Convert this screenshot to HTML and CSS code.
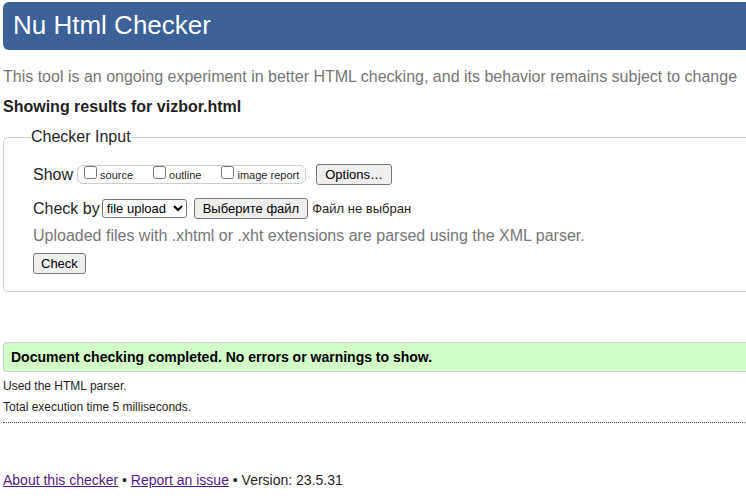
FILE: index.html
```html
<!DOCTYPE html>
<html lang="en">
<head>
<meta charset="utf-8">
<meta name="viewport" content="width=device-width, initial-scale=1">
<title>Nu Html Checker</title>
<link rel="stylesheet" href="styles.css">
</head>
<body>
<header class="banner"><h1>Nu Html Checker</h1></header>
<main>
<p class="intro">This tool is an ongoing experiment in better HTML checking, and its behavior remains subject to change</p>
<h2 class="subject">Showing results for vizbor.html</h2>
<form>
<fieldset class="panel">
<legend>Checker Input</legend>
<div class="row show-row">
<span>Show</span>
<div class="checks">
<label><input type="checkbox" name="source"><span>source</span></label>
<label><input type="checkbox" name="outline"><span>outline</span></label>
<label><input type="checkbox" name="images"><span>image report</span></label>
</div>
<button type="button" class="btn">Options…</button>
</div>
<div class="row input-row">
<label for="method">Check by</label>
<select id="method" class="method"><option>file upload</option></select>
<label class="file"><span class="btn">Выберите файл</span><span>Файл не выбран</span><input type="file" name="file"></label>
</div>
<p class="hint">Uploaded files with .xhtml or .xht extensions are parsed using the XML parser.</p>
<button type="button" class="btn">Check</button>
</fieldset>
</form>
<p class="success">Document checking completed. No errors or warnings to show.</p>
<div class="details">
<p>Used the HTML parser.</p>
<p>Total execution time 5 milliseconds.</p>
</div>
</main>
<footer><a href="#about">About this checker</a> • <a href="#issue">Report an issue</a> • Version: 23.5.31</footer>
</body>
</html>
```

FILE: styles.css
```css
* {
  box-sizing: border-box;
}

body {
  margin: 0;
  padding: 2px 0 0 3px;
  background: #fff;
  color: #1f1f1f;
  font: 16px/20px "Liberation Sans", Arial, sans-serif;
}

h1,
h2,
p {
  margin: 0;
}

.banner {
  padding: 7px 10px 9px;
  border-radius: 6px 0 0 6px;
  background: #3c6098;
  color: #fff;
}

h1 {
  font-size: 26px;
  font-weight: 400;
  line-height: 32px;
}

.intro {
  margin-top: 17px;
  color: #767676;
  white-space: nowrap;
}

.subject {
  margin-top: 10px;
  font-size: 16px;
  line-height: 20px;
}

.panel {
  min-width: 0;
  margin: 10px 0 0;
  padding: 17px 0 17px 29px;
  border: 1px solid #ccc;
  border-right: 0;
  border-radius: 5px 0 0 5px;
}

legend {
  margin-left: -2px;
  padding: 0;
}

.row {
  display: flex;
  align-items: center;
}

.checks {
  display: flex;
  gap: 20px;
  height: 19px;
  margin: 0 10px 0 4px;
  padding: 0 6px;
  border: 1px solid #ccc;
  border-radius: 6px;
  font-size: 11px;
  line-height: 19px;
}

.checks label {
  display: flex;
  gap: 3px;
}

.checks input {
  width: 13px;
  height: 13px;
  margin: 0;
}

.btn {
  display: inline-block;
  height: 21px;
  padding: 0 7px;
  border: 1px solid #767676;
  border-radius: 3px;
  background: #efefef;
  color: #000;
  font: 13px/19px "Liberation Sans", Arial, sans-serif;
}

.show-row .btn,
.file .btn {
  padding: 0 8px;
}

.input-row {
  margin-top: 13px;
}

.method {
  width: 85px;
  height: 19px;
  margin: 0 7px 0 2px;
  padding: 0;
  border: 1px solid #767676;
  border-radius: 3px;
  background: #fff;
  color: #000;
  font: 13px "Liberation Sans", Arial, sans-serif;
}

.file {
  position: relative;
  display: flex;
  align-items: center;
  gap: 4px;
  font-size: 13px;
}

.file input {
  position: absolute;
  inset: 0;
  width: 100%;
  opacity: 0;
}

.hint {
  margin: 7px 0;
  color: #767676;
}

.success {
  margin-top: 50px;
  padding: 4px 7px;
  border: 1px solid #ccc;
  border-right: 0;
  border-radius: 4px 0 0 4px;
  background: #d2fdc7;
  color: #000;
  font-size: 14px;
  font-weight: 700;
  line-height: 20px;
}

.details {
  margin-top: 4px;
  font-size: 12px;
  line-height: 21px;
}

footer {
  margin: 4px 1px 0 0;
  padding-top: 47px;
  border-top: 1px dotted #555;
  font-size: 14px;
}

a {
  color: #551a8b;
}
```
